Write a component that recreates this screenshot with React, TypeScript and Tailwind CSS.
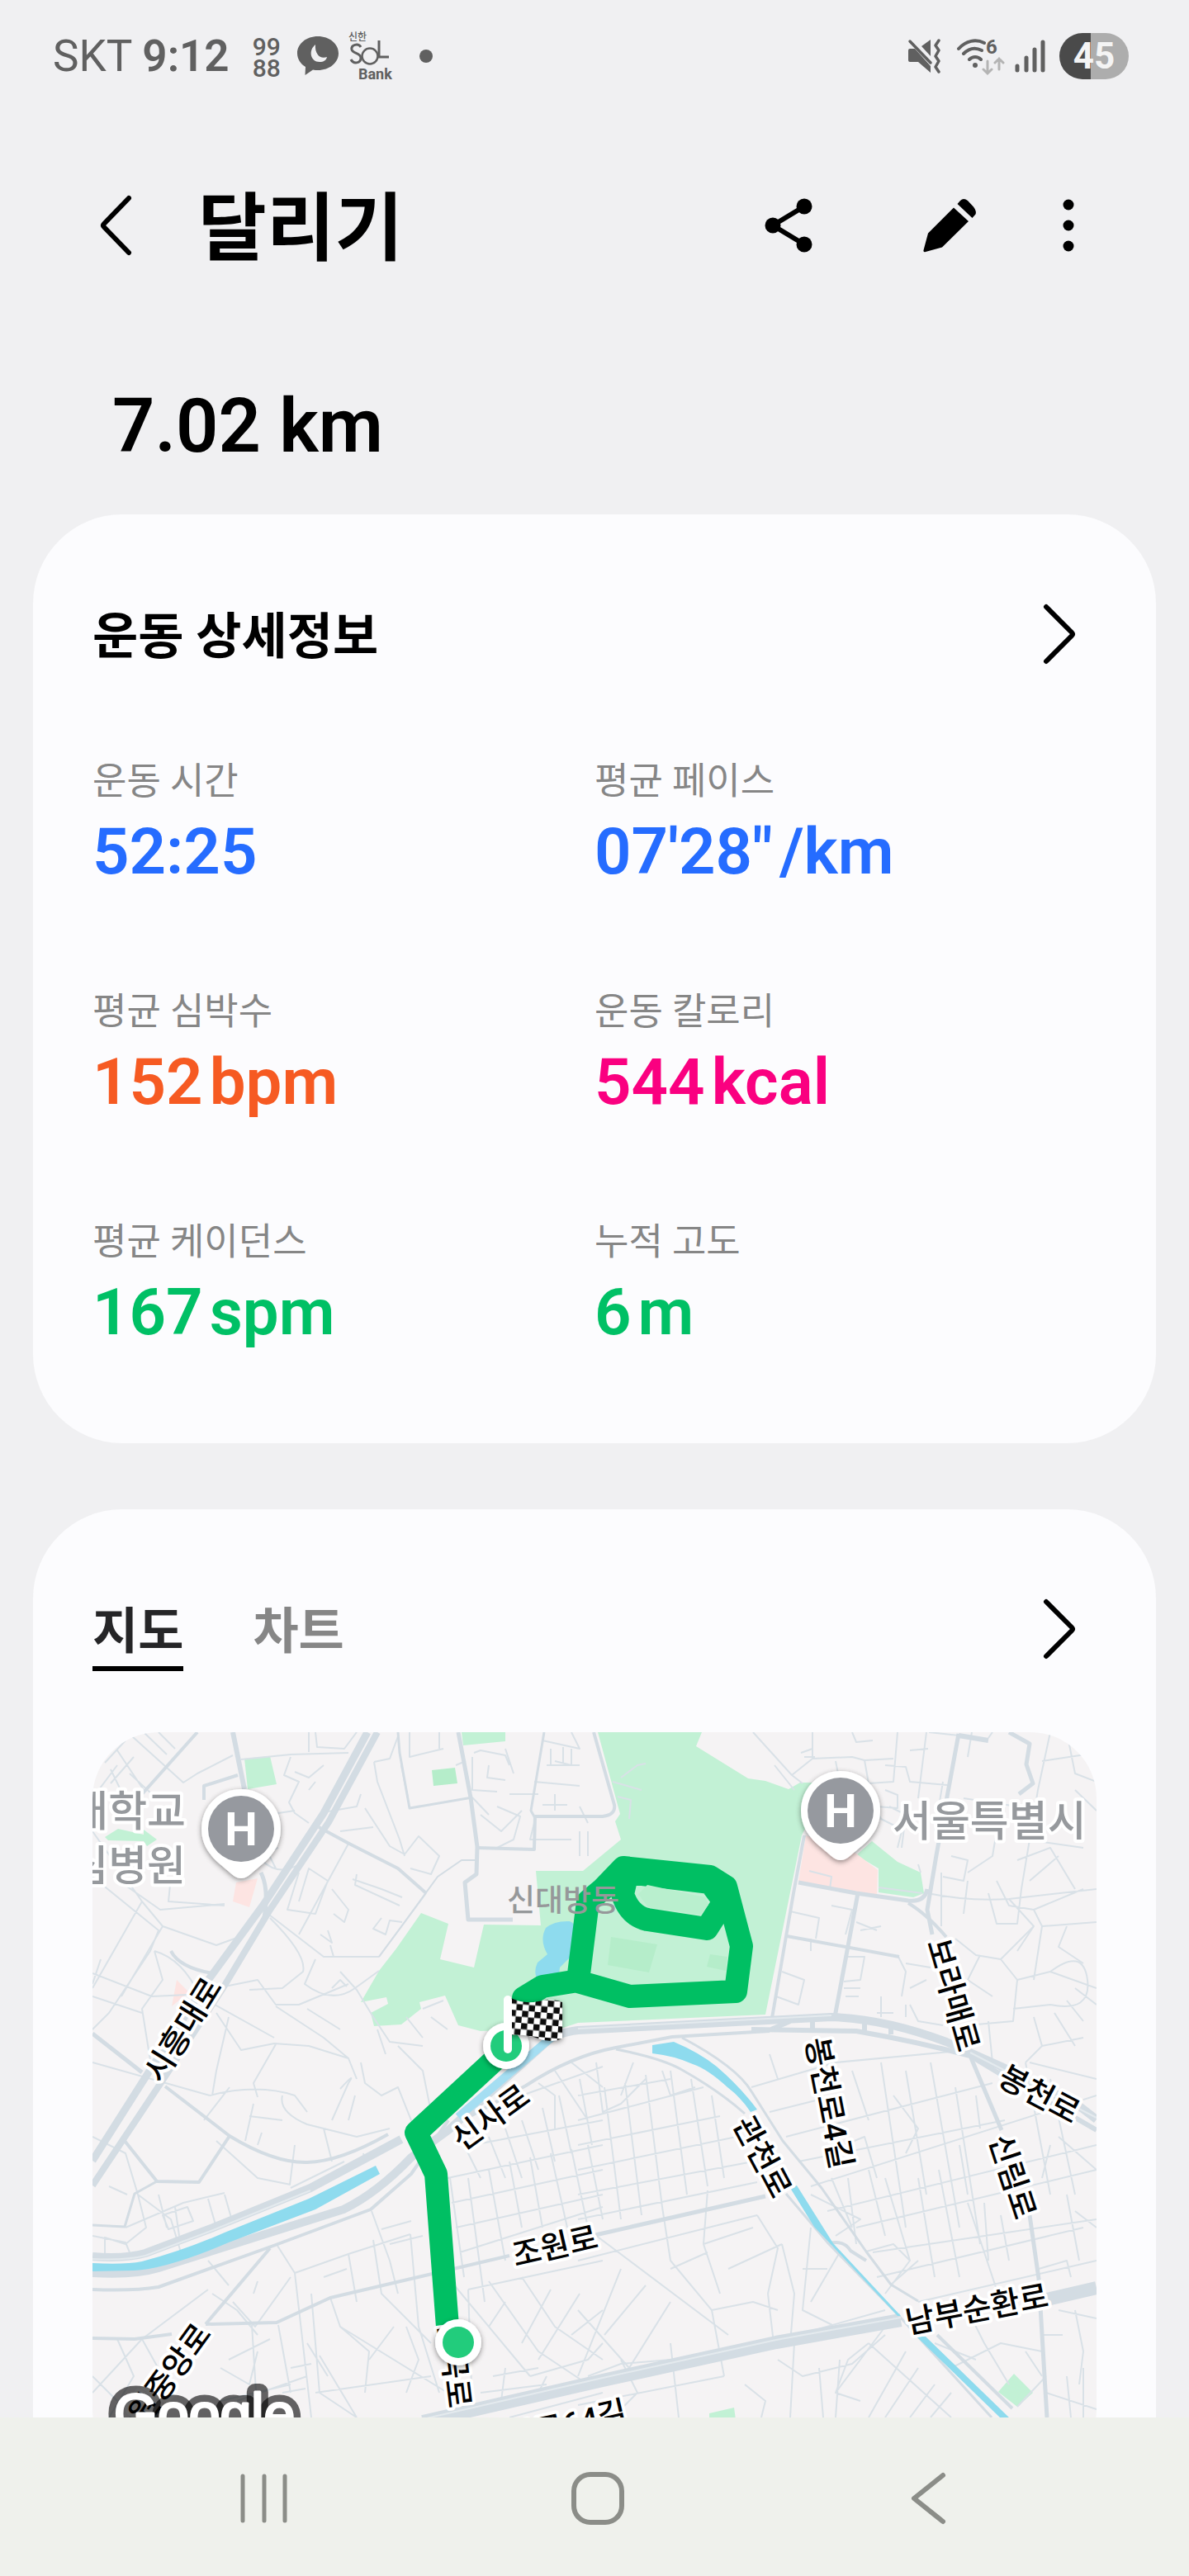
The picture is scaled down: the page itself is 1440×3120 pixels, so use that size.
import { useState } from "react";

type Stat = { label: string; value: string; unit?: string; color: string };

const STATS: Stat[] = [
  { label: "운동 시간", value: "52:25", color: "text-[#256cff]" },
  { label: "평균 페이스", value: "07'28\"", unit: "/km", color: "text-[#256cff]" },
  { label: "평균 심박수", value: "152", unit: "bpm", color: "text-[#f65a22]" },
  { label: "운동 칼로리", value: "544", unit: "kcal", color: "text-[#fa0080]" },
  { label: "평균 케이던스", value: "167", unit: "spm", color: "text-[#00c065]" },
  { label: "누적 고도", value: "6", unit: "m", color: "text-[#00c065]" },
];

export default function App() {
  const [tab, setTab] = useState<"map" | "chart">("map");

  return (
    <div className="flex h-screen flex-col bg-[#f0f0f2] font-['Roboto','Noto_Sans_CJK_KR',sans-serif] text-black">
      <StatusBar />

      <main className="min-h-0 flex-1 overflow-y-auto [scrollbar-width:none]">
        <header className="flex h-[274px] items-center pr-[129px] pl-[104px]">
          <button type="button" aria-label="뒤로" className="flex w-[72px] justify-center">
            <Chevron back />
          </button>
          <h1 className="ml-16 flex-1 pt-2.5 text-[90px] leading-none font-bold">달리기</h1>
          <div className="flex items-center">
            <button type="button" aria-label="공유" className="mr-[132px]">
              <ShareIcon />
            </button>
            <button type="button" aria-label="편집" className="mr-[94px]">
              <PencilIcon />
            </button>
            <button type="button" aria-label="더보기">
              <MoreIcon />
            </button>
          </div>
        </header>

        <p className="flex h-[213px] items-center pl-[136px] text-[90px] leading-none font-semibold">7.02 km</p>

        <section className="mx-10 rounded-[108px] bg-[#fcfcfe] px-[72px] pt-[108px] pb-[103px]">
          <div className="flex h-[74px] items-center justify-between pr-6">
            <h2 className="pt-2 text-[60px] leading-none font-semibold">운동 상세정보</h2>
            <button type="button" aria-label="운동 상세정보 보기">
              <Chevron />
            </button>
          </div>
          <dl className="mt-28 grid grid-cols-2 gap-y-[109px]">
            {STATS.map((s) => (
              <div key={s.label}>
                <dt className="text-[45px] leading-[60px] text-[#868686]">{s.label}</dt>
                <dd className={`text-[78px] leading-[110px] font-semibold ${s.color}`}>
                  {s.value}
                  {s.unit && <span className="ml-2">{s.unit}</span>}
                </dd>
              </div>
            ))}
          </dl>
        </section>

        <section className="mx-10 mt-20 rounded-t-[108px] bg-[#fcfcfe] px-[72px] pt-[108px] pb-20">
          <div className="flex items-start justify-between pr-6">
            <div role="tablist" className="flex gap-[84px] text-[60px] leading-[82px] font-semibold">
              <button
                type="button"
                role="tab"
                aria-selected={tab === "map"}
                onClick={() => setTab("map")}
                className={`border-b-6 ${tab === "map" ? "border-black text-[#252527]" : "border-transparent text-[#868686]"}`}
              >
                지도
              </button>
              <button
                type="button"
                role="tab"
                aria-selected={tab === "chart"}
                onClick={() => setTab("chart")}
                className={`border-b-6 ${tab === "chart" ? "border-black text-[#252527]" : "border-transparent text-[#868686]"}`}
              >
                차트
              </button>
            </div>
            <button type="button" aria-label="지도 크게 보기">
              <Chevron />
            </button>
          </div>
          <div className="mt-[74px] overflow-hidden rounded-[80px]">
            <RouteMap />
          </div>
        </section>
      </main>

      <nav className="flex h-48 shrink-0 items-center justify-between bg-[#eff1ec] px-[288px] pt-1 text-[#8b8d88]">
        <button type="button" aria-label="최근 앱">
          <svg width="64" height="64" viewBox="0 0 64 64" fill="none" stroke="currentColor" strokeWidth="5" strokeLinecap="round" aria-hidden="true">
            <path d="M6 5v54M32 5v54M57 5v54" />
          </svg>
        </button>
        <button type="button" aria-label="홈">
          <svg width="66" height="66" viewBox="0 0 66 66" fill="none" stroke="currentColor" strokeWidth="6" aria-hidden="true">
            <rect x="4" y="4" width="58" height="58" rx="20" />
          </svg>
        </button>
        <button type="button" aria-label="뒤로 가기">
          <svg width="56" height="64" viewBox="0 0 56 64" fill="none" stroke="currentColor" strokeWidth="6" strokeLinecap="round" strokeLinejoin="round" aria-hidden="true">
            <path d="M46 4L11 32l35 28" />
          </svg>
        </button>
      </nav>
    </div>
  );
}

function StatusBar() {
  return (
    <div className="flex h-[136px] shrink-0 items-center justify-between pr-[73px] pl-16 text-[#606060]">
      <div className="flex items-center">
        <span className="text-[53px] leading-none">SKT</span>
        <span className="ml-3 text-[53px] leading-none font-semibold">9:12</span>
        <span className="ml-7 flex flex-col pt-1 text-[30px] leading-[26px] font-medium">
          <span>99</span>
          <span>88</span>
        </span>
        <svg className="ml-5" width="50" height="48" viewBox="0 0 50 48" aria-hidden="true">
          <path d="M25 0C11 0 0 9 0 20.500c0 7 4 13 10 16.500L9.500 47 19 40.500c2 .4 4 .5 6 .5 14 0 25-9 25-20.500S39 0 25 0z" fill="currentColor" />
          <path d="M22 10c-9 7-6 21 5 21 5 0 8-2 9-6-8 3-15-3-14-15z" fill="#f0f0f2" />
        </svg>
        <svg className="ml-3" width="54" height="72" viewBox="0 -6 54 72" fill="none" aria-hidden="true">
          <text x="0" y="11" fontSize="12" fontWeight="500" fill="currentColor">신한</text>
          <path d="M15 19c-3-5-12-3-11 3 1 5 11 4 11 10 0 7-9 8-12 2" stroke="currentColor" strokeWidth="3" />
          <circle cx="26" cy="30" r="9.500" stroke="currentColor" strokeWidth="2.500" />
          <path d="M37 11v20h12" stroke="currentColor" strokeWidth="3" />
          <text x="12" y="58" fontSize="18" fontWeight="700" fill="currentColor">Bank</text>
        </svg>
        <span className="ml-8 size-4 rounded-full bg-[#606060]" />
      </div>

      <div className="flex items-center">
        <svg width="40" height="42" viewBox="0 0 40 42" fill="none" aria-hidden="true">
          <path d="M1 14q0-2 2-2h6L28 33v8L13 28H3q-2 0-2-2zM17 9l11-8v20z" fill="currentColor" />
          <path d="M3 3l25 26" stroke="currentColor" strokeWidth="3.500" strokeLinecap="round" />
          <path d="M38 2l-4 6 4 6-4 7 4 6-4 7 4 6" stroke="currentColor" strokeWidth="3.500" strokeLinecap="round" strokeLinejoin="round" />
        </svg>
        <svg className="ml-5" width="58" height="56" viewBox="0 -6 58 56" fill="none" strokeLinecap="round" aria-hidden="true">
          <path d="M2 13C11 3 23 1 33 6M8 19c6-6 14-8 22-4M15 26c4-4 10-4 14 0" stroke="currentColor" strokeWidth="4" />
          <circle cx="22" cy="33" r="3" fill="currentColor" />
          <text x="35" y="19" fontSize="24" fontWeight="700" fill="currentColor">6</text>
          <path d="M37 28v14M32 38l5 5 5-5M51 38V25M46 30l5-5 5 5" stroke="#b4b4b4" strokeWidth="3" />
        </svg>
        <svg className="ml-3" width="38" height="42" viewBox="0 0 38 42" stroke="currentColor" strokeWidth="5" strokeLinecap="round" aria-hidden="true">
          <path d="M3 33v5M14 23v15M24 13v25M34 4v34" />
        </svg>
        <span className="ml-4 flex h-14 w-[84px] items-center justify-center rounded-full bg-linear-to-r from-[#4a4a4a] from-45% to-[#adadad] to-45% text-[44px] leading-none font-bold text-[#f4f4f4]">
          45
        </span>
      </div>
    </div>
  );
}

function Chevron({ back = false }: { back?: boolean }) {
  return (
    <svg width="41" height="74" viewBox="0 0 41 74" fill="none" stroke="currentColor" strokeWidth="6" strokeLinecap="round" strokeLinejoin="round" aria-hidden="true">
      <path d={back ? "M36 4L6 35q-2 2 0 4l30 31" : "M4 4l31 31q2 2 0 4L4 70"} />
    </svg>
  );
}

function ShareIcon() {
  return (
    <svg width="60" height="68" viewBox="0 0 60 68" fill="currentColor" aria-hidden="true">
      <path d="M49 11L11 34l38 23" fill="none" stroke="currentColor" strokeWidth="6" />
      <circle cx="49" cy="11" r="9.500" />
      <circle cx="11" cy="34" r="9.500" />
      <circle cx="49" cy="57" r="9.500" />
    </svg>
  );
}

function PencilIcon() {
  return (
    <svg width="66" height="66" viewBox="0 0 66 66" fill="currentColor" aria-hidden="true">
      <path d="M38 11.500L56 28 24 59.500 4 65q-3 1-2.500-2L7 42.500zM42.500 7l3.500-4q4-4 9 0l7 7.500q4 5 2.500 9L60.500 24z" />
    </svg>
  );
}

function MoreIcon() {
  return (
    <svg width="34" height="68" viewBox="0 0 34 68" fill="currentColor" aria-hidden="true">
      <circle cx="17" cy="9" r="6.500" />
      <circle cx="17" cy="34" r="6.500" />
      <circle cx="17" cy="59" r="6.500" />
    </svg>
  );
}

const PARKS = [
  "M184 32L215 29 223 63 188 69z",
  "M447 0H500V11L449 16z",
  "M15 127L31 117 62 124 62 118 78 130 66 138 62 132 19 131z",
  "M398 219L431 232 421 275 462 285 474 233 543 234 537 168H594L640 130 633 108 639 99 612 0H738L731 17 794 56 815 59 843 69 857 61H890L859 125 815 342 588 352 570 358 470 362 443 355 427 319 396 327 398 335 374 354 341 356 337 340 358 329 356 321 325 327 347 289 368 262z",
  "M944 132L975 157 1003 170 1007 195 994 200 952 194 952 165 925 149z",
  "M1116 777L1139 800 1120 817 1097 799z",
  "M747 825L777 818 780 840H747z",
];

const FIELDS = ["M411 46L439 43 442 62 413 65z", "M628 248L684 257 674 291 624 282z", "M748 269L769 272 767 289 744 284z"];

const HOSPITAL_GROUNDS = ["M174 182L200 177 190 212 170 205z", "M102 300L117 315 96 332z", "M864 125L925 147 951 167 950 197 855 181z"];

const WATER = [
  "M578 229Q586 232 584 242L582 269 566 285 564 300 543 304Q532 294 539 279L551 269Q541 252 549 237 560 228 578 229z",
  "M678 379L704 375Q735 388 756 405 785 430 805 457L797 460Q785 442 769 430 745 408 727 402 705 392 678 389z",
  "M845 552L853 549 897 619 979 707H975L893 619 874 599z",
  "M998 732H1009L1110 830H1099z",
  "M0 643Q40 645 60 641 110 628 160 606L262 565 343 525 348 535 270 578 165 618Q90 650 50 652L0 653z",
];

const STREETS = [
  // north-west
  "M48 5L110 61 127 50 170 28M15 37L40 10M30 22L62 70M62 0L90 27M80 0L100 20M0 80L30 40M45 50L72 75M22 45L38 78M50 30L22 62",
  "M180 33L240 27 310 25M262 0V24M270 0L272 18 305 20 320 0M240 30L232 52 250 60 238 85 245 98 262 110",
  "M245 48L262 55 280 40M262 70L270 60M200 95L225 98 245 95M222 165L212 145 225 140M250 205L262 165 285 180 270 220 236 215 250 170",
  "M205 155Q225 175 250 160M341 36L345 60 372 130 378 150M341 36L360 32 370 5M374 40L382 80M460 79L480 100",
  "M280 97L320 90 325 75M300 120L340 115M330 92L360 138 378 148 395 126 420 150 410 172 385 165M315 178L350 190 375 200M320 172L318 185 372 210",
  "M310 135L250 245M404 195L347 272M290 190L310 215 305 230 292 220M350 225L340 238 355 245 360 228 375 230M276 245L290 255 285 240M288 258L292 272",
  "M210 218L280 272 347 272M215 225Q260 270 255 290L230 310 190 312M270 275L257 305Q290 330 318 310L347 289M290 310L300 300 308 308",
  "M0 120L60 205 0 310M60 205L85 235 150 258 172 250M0 175L80 240 70 265 20 340 0 360M85 235L35 320M35 182L82 215 160 208",
  "M95 175L92 205 160 210M75 265Q110 275 130 320L220 370M75 265L85 300 60 335 72 410M0 292L72 320 115 318M0 320L60 340M10 275L0 305",
  "M150 310L200 300 222 330 250 330 310 305M150 340L180 385 220 377 262 380 310 395 320 420M222 332L280 370 310 395M222 378L195 425 200 442",
  "M165 345L150 410 145 440M260 335L300 360M300 290L320 312 340 345 360 375 400 380M345 360L355 390M380 345L400 370M410 345L430 360M400 335L425 325",
  "M370 380L400 410 410 460M300 432Q320 410 310 425L290 470M325 400L330 425 350 440 370 430 390 480M230 440Q225 460 260 475L320 490 360 480",
  // north centre
  "M384 0V30L425 20M420 20V0M452 35L440 40M462 25L470 22 500 28 505 40M460 30V70L490 72M480 40L478 55 500 58M470 100L495 120 520 95M500 20L510 50M550 40H590M555 20V40M570 18V40M580 20V40",
  "M545 10L590 20 580 0M560 35L580 40M535 60L590 65M505 75H540M535 110L530 130H580M590 120V150M600 120V150M600 110L590 90M490 90L518 102 510 130 490 140",
  "M560 75V95M545 88H575M640 55L660 40 670 38M630 60L665 70M636 78L652 82 650 105",
  // north-east
  "M800 0L847 52 860 62M847 52L872 32 920 30 935 34 970 32M872 0V30M900 35L905 60M862 30H875M858 25L872 20M935 34L940 62 970 60 975 0M960 40L985 42 990 60 1035 64",
  "M826 40L850 70M1010 0L1000 80M990 22L1012 20M1013 0L1049 4M1030 60L1020 120M1085 7L1090 0M1065 0L1060 30M1055 80L1120 90M920 0L925 12 945 10",
  "M960 70L975 76V92L950 90M965 90L985 100 980 140M1160 0L1145 70 1135 130 1125 190M1180 0L1190 50 1216 60M1150 35L1216 25M1190 70L1216 95",
  "M1100 90L1090 150 1060 170M1040 150L1060 155 1055 180 1030 175M1130 130L1200 140M1120 155L1160 140 1190 190M1135 180L1170 150M1095 180L1110 210 1140 215 1200 190",
  "M1011 195Q1060 205 1110 202L1216 190M1028 170V235M1060 180L1055 220M1085 195L1095 232H1120L1125 190M1140 215L1150 235 1216 230M1140 235L1100 275 1070 270 1045 250",
  "M1110 202L1140 235 1120 265M1180 235L1170 260 1200 280M1150 235L1140 300M1100 275L1120 300 1115 350 1060 355M1120 300L1160 290 1216 310M1160 290Q1200 260 1205 300T1160 330L1115 335",
  "M1075 270L1060 300 1090 320M1190 310L1216 330M1165 340L1190 380M1180 325L1200 350M1140 345L1150 380 1130 400M1085 350L1090 400 1110 420M1150 380L1200 370",
  "M845 217L880 225 876 250M895 210L920 215 912 245M925 230L950 240M930 240L955 235M835 290L862 300 855 330 828 320M870 250V265M912 272L935 272 930 300 910 302M910 310H930M912 320H928M955 320V345M975 270L985 290 980 320M990 310L1010 300M985 280L1015 285M950 340H970",
  "M1000 160L1003 170M920 90L930 130M945 85L955 105 975 115M980 120L975 140M952 188L1005 195M868 168L895 175 893 190M990 330L1000 350 1030 355M985 330V345",
  // west of the stream
  "M0 490L40 510 55 560M20 550L42 560M55 560L65 600 40 620 15 612V632M55 560L95 590 110 640M80 560L90 600M100 575L105 610M140 565L150 600M160 560L170 595M40 600L110 570 160 558M150 495L200 540 240 548",
  "M85 585L115 575 122 592 92 602zM0 610L40 618 45 630M240 552L305 520M239 548L245 500M166 430L135 470M142 440Q200 425 245 440L260 460M195 450L185 495M190 465L230 470M142 440L0 400M200 500L205 485M280 480L290 520M330 520L328 510M310 470L318 440",
  "M140 675L60 735 0 800M60 735L85 780M130 720L45 830M145 680L175 700 200 730M30 735L50 780 20 830M0 780L30 810M140 640L165 670M200 665L195 680M170 690L197 720 240 660M155 770L190 790 200 750M155 810L240 790M193 718L200 830M225 718L240 800M165 760L215 735",
  "M224 622L245 655 265 830M245 655L310 632 385 608M265 680L275 800 320 830M288 685L300 720 430 800M300 720L335 750 330 800M275 755L320 830M310 632L320 690M280 660L308 650M340 615L350 680 410 740M385 608L395 720 420 800",
  "M338 580L360 640 370 680M350 602L386 592M360 620L400 610M260 740L285 780M270 800L410 780M365 720L335 760M230 800L258 795M240 770L265 765M175 810L260 780M380 720L395 760 380 800",
  // south centre
  "M430 540L618 500M435 570L618 530M440 600L618 560M445 630L618 575M433 540L450 660M455 540L475 690M480 530L500 640M505 520L520 600M530 515L545 600M555 510L575 600M580 505L600 600M600 500L618 590",
  "M460 500L618 470M480 490L500 540M500 480L520 540M520 470L540 530M545 455L560 520M565 440L580 510M590 420L605 500M520 440L618 405M540 425L560 440 560 480M560 410L600 470M580 400L618 430M450 500L470 540M445 490L470 480",
  "M455 675L618 640M430 660L530 780M455 675L460 820M480 665L540 750 600 790M500 690L480 720M520 660L560 720 618 760M555 675L520 740M590 680L540 760M618 700L580 730M530 780L600 760 618 740M500 770L495 810 540 800 550 780M485 780L540 770M470 800L550 790M505 830L618 800",
  "M588 440L700 420M588 470L740 430M588 500L760 465M588 530L780 490M588 560L800 520M620 430L640 590M645 425L665 585M670 415L690 575M700 410L720 560M725 420L745 550M750 440L765 540M610 400L618 460 640 450 670 420M655 400L640 440M690 410L700 440 730 430",
  "M588 590L805 545M588 640L805 585M609 609L770 730M640 650L588 780M690 575L700 640 750 700 765 780M745 555L740 620 760 680M805 585L830 625 818 680 825 740M770 650L835 620M700 650L745 630M740 620L800 600M700 690L650 770M670 670L620 730M588 700L650 770",
  "M750 700L800 690 830 700M765 755L960 700M588 815L765 780M835 620L850 680 845 740M870 600L860 700 900 720M860 650L890 650M905 630L870 690M830 760L860 780 920 765 960 730M850 740L845 830M700 740L710 830M640 760L660 800 640 820M790 790L815 810 810 830M880 770L885 830M905 760L900 830M600 780L640 765 700 760",
  // south-east
  "M798 430L900 400 1060 385M820 460L900 440M840 490L1090 425M855 520L1105 470M870 550L1216 440M890 580L1216 500M925 600L1216 530M945 630L1216 590M950 660L1200 600M1000 690L1216 640M955 400L985 600M985 410L1010 560M1015 400L1050 600M1045 430L1075 620M970 440L1000 480 985 510",
  "M920 410L940 470M895 540L920 600M915 540L925 620M940 530L960 610M960 540L990 640 960 680M1000 540L1020 660M1025 530L1050 660M1060 570L1090 660 1100 690M1080 570L1085 640M910 500L935 490 950 540M1100 585L1110 640M870 560L930 590 900 610M1130 400L1160 560M1160 420L1190 560M1170 490L1216 530",
  "M937 629L970 620 990 640M967 669L1000 640M1135 400L1216 420M1160 500L1150 540M1180 560L1195 640M1190 580L1216 600M1050 500L1060 560M1070 440L1075 480M830 420L820 390M1146 650L1180 640 1185 660M1150 730H1175M1190 700L1200 750 1195 790M1170 700L1216 710",
  "M1040 770L1100 740 1150 750M1020 740L1070 760M1060 700L1080 740 1110 790M1130 750L1150 780M1155 800L1216 820M1180 780L1185 830M1200 770V830M1120 817L1155 780M940 740L1040 830M960 720L900 800 930 810M985 750L940 830M1000 770L960 830M1020 790L990 830M1040 800L1015 830M900 800L915 760 940 740",
];

// [width, path]
const ROADS: [number, string][] = [
  [6, "M170 0L184 69"],
  [4, "M127 0L60 75"],
  [4, "M135 82V65L176 52"],
  [5, "M204 170Q214 190 208 225"],
  [4, "M274 115L309 134 370 165 404 195"],
  [3, "M370 0L372 25 384 92 460 79"],
  [5, "M443 0L458 79 466 139 465 172 451 182 455 227H509"],
  [4, "M466 140L535 142 536 102H618Q634 100 632 88L607 0"],
  [3, "M547 0L531 95 536 104"],
  [2, "M347 272L378 230 418 175 447 155H465"],
  [4, "M95 265Q105 285 145 292"],
  [4, "M88 429L166 489Q220 522 260 521T358 487"],
  [4, "M166 489L129 545 78 544 39 495"],
  [3, "M78 544L51 559 39 599 0 597"],
  [5, "M0 365L60 412"],
  [4, "M0 734L51 735 96 729"],
  [4, "M137 717L223 715 288 685 505 634"],
  [4, "M137 717L215 625"],
  [5, "M609 609L815 562"],
  [4, "M862 125L849 195 822 352"],
  [5, "M855 182L925 195 988 204Q1008 206 1011 190"],
  [5, "M927 195L899 345"],
  [4, "M841 247L977 272"],
  [5, "M1049 2L1022 149 1011 215 1017 245"],
  [4, "M988 207Q1010 220 1034 248"],
  [6, "M1049 4L1085 10"],
  [5, "M1110 0L1135 14 1131 39 1139 62 1122 75"],
  [5, "M1063 392L1101 482"],
  [5, "M1135 585L1146 662 1156 830"],
  [4, "M431 470L386 535 337 578 219 622 80 672Q50 677 0 675"],
  [4, "M434 478L525 428Q580 392 634 382L702 369 820 362"],
  [3, "M634 384Q690 395 714 409 760 435 790 462M840 559L891 619 975 705 1089 830"],
  [3, "M714 370Q780 405 798 435L836 495 883 552 937 629 967 669 1000 689"],
  [4, "M893 619Q910 615 918 628L937 640M1023 730L1114 819"],
  [6, "M822 360L845 350M872 348V360M935 350V363M967 352V366"],
  [6, "M798 360L925 362Q1000 375 1063 392L1101 415 1216 482"],
  [9, "M333 0L280 98 207 209 141 299 66 415 0 519"],
  [8, "M345 0L286 109 215 215 158 310 80 429 0 549"],
  [10, "M1216 469L1194 452 1101 405 1034 375Q960 347 895 345L798 350 588 361Q562 364 549 376L431 482 386 515Q345 558 304 578L80 649Q50 658 0 655"],
  [10, "M374 493L264 552 141 602 64 631Q40 638 0 635"],
  [16, "M400 835L618 785 828 739 979 712M1156 687L1216 673"],
];

const HIGHWAY_LINES = "M400 832L618 782 828 736 979 709M588 359L798 348 895 343M1063 388L1216 467M0 638Q40 640 64 634L141 605 264 555";

type RoadLabel = { text: string; x: number; y: number; angle: number };

const ROAD_LABELS: RoadLabel[] = [
  { text: "시흥대로", x: 109, y: 360, angle: -58 },
  { text: "보라매로", x: 1043, y: 318, angle: 74 },
  { text: "봉천로", x: 1147, y: 438, angle: 28 },
  { text: "봉천로4길", x: 893, y: 449, angle: 79 },
  { text: "관천로", x: 812, y: 514, angle: 62 },
  { text: "신림로", x: 1115, y: 538, angle: 72 },
  { text: "남부순환로", x: 1071, y: 698, angle: -11 },
  { text: "신사로", x: 482, y: 466, angle: -36 },
  { text: "조원로", x: 560, y: 622, angle: -13 },
  { text: "원중앙로", x: 93, y: 777, angle: -54 },
  { text: "난곡로", x: 439, y: 766, angle: 83 },
  { text: "난곡로64길", x: 557, y: 842, angle: -13 },
];

function RouteMap() {
  return (
    <svg viewBox="0 0 1216 900" className="block w-full" fill="none" strokeLinejoin="round" role="img" aria-label="달리기 경로 지도">
      <defs>
        <pattern id="checks" width="15" height="15" patternUnits="userSpaceOnUse" patternTransform="translate(507 321) rotate(5)">
          <rect width="15" height="15" fill="#fff" />
          <path d="M0 0h7.500v7.500H0zM7.500 7.500H15V15H7.500z" fill="#111" />
        </pattern>
        <filter id="drop" x="-30%" y="-30%" width="160%" height="160%">
          <feDropShadow dx="0" dy="2" stdDeviation="3" floodColor="#000" floodOpacity="0.45" />
        </filter>
      </defs>

      <rect width="1216" height="900" fill="#f5f3f4" />
      <path d={PARKS.join("")} fill="#c2f1d5" />
      <path d={HOSPITAL_GROUNDS.join("")} fill="#fde4e2" />
      <path d={FIELDS.join("")} fill="#b5edca" />

      <path d={STREETS.join("")} stroke="#d9e1e7" strokeWidth="2" />
      {ROADS.map(([width, d]) => (
        <path key={d} d={d} stroke="#d3dce3" strokeWidth={width} />
      ))}
      <path d={HIGHWAY_LINES} stroke="#e4eaee" strokeWidth="2" />
      <path d={WATER.join("")} fill="#8edbee" />
      <path d="M443 466L560 366" stroke="#a5def2" strokeWidth="10" />

      <path
        d="M430 720L416 535 392 485 500 385M522 322L545 308 588 301 600 205 618 190 643 164 748 175 767 187 786 259 779 314 651 320 588 302M648 170L748 182 765 205 744 238 672 227Q650 222 642 196z"
        stroke="#00bf63"
        strokeWidth="28"
        strokeLinecap="round"
      />
      <path d="M672 185L742 200 746 209 736 221 673 212 661 196z" fill="#b9efce" />
      <text x="502" y="217" fontSize="37" fontWeight="500" fill="#96989a">신대방동</text>

      <g fill="#96999d" stroke="#fff" strokeWidth="8" paintOrder="stroke" fontSize="51" fontWeight="500">
        <text x="113" y="114" textAnchor="end">대학교</text>
        <text x="113" y="180" textAnchor="end">심병원</text>
        <text x="969" y="126">서울특별시</text>
      </g>

      <g fill="#000" stroke="#fff" strokeWidth="8" paintOrder="stroke" fontSize="38" fontWeight="500" textAnchor="middle">
        {ROAD_LABELS.map((l) => (
          <text key={l.text} transform={`translate(${l.x} ${l.y}) rotate(${l.angle})`} y="14">
            {l.text}
          </text>
        ))}
      </g>

      <HospitalPin x={180} y={117} />
      <HospitalPin x={906} y={95} />

      <g filter="url(#drop)">
        <circle cx="443" cy="739" r="28" fill="#fff" />
        <circle cx="501" cy="380" r="28" fill="#fff" />
      </g>
      <circle cx="443" cy="739" r="19" fill="#22cc7c" />
      <circle cx="501" cy="380" r="19" fill="#22cc7c" />
      <g filter="url(#drop)">
        <path d="M505 321Q522 330 540 326T569 327V371Q556 377 540 371T505 367z" fill="url(#checks)" />
      </g>
      <path d="M503 324V384" stroke="#fff" strokeWidth="10" strokeLinecap="round" />

      <g fontFamily="'Liberation Sans', sans-serif" fontSize="68">
        <text x="26" y="849" stroke="#000" strokeOpacity="0.6" strokeWidth="20">Google</text>
        <text x="26" y="849" fill="#fff" stroke="#fff" strokeWidth="3">Google</text>
      </g>
    </svg>
  );
}

function HospitalPin({ x, y }: { x: number; y: number }) {
  return (
    <g transform={`translate(${x} ${y})`}>
      <path d="M0-48C-27-48-48-27-48 0-48 17-40 29-30 39L-10 56Q0 64 10 56L30 39C40 29 48 17 48 0 48-27 27-48 0-48z" fill="#fff" filter="url(#drop)" />
      <circle r="40" fill="#96999f" />
      <text y="20" fontSize="56" fontWeight="700" textAnchor="middle" fill="#fff">H</text>
    </g>
  );
}
